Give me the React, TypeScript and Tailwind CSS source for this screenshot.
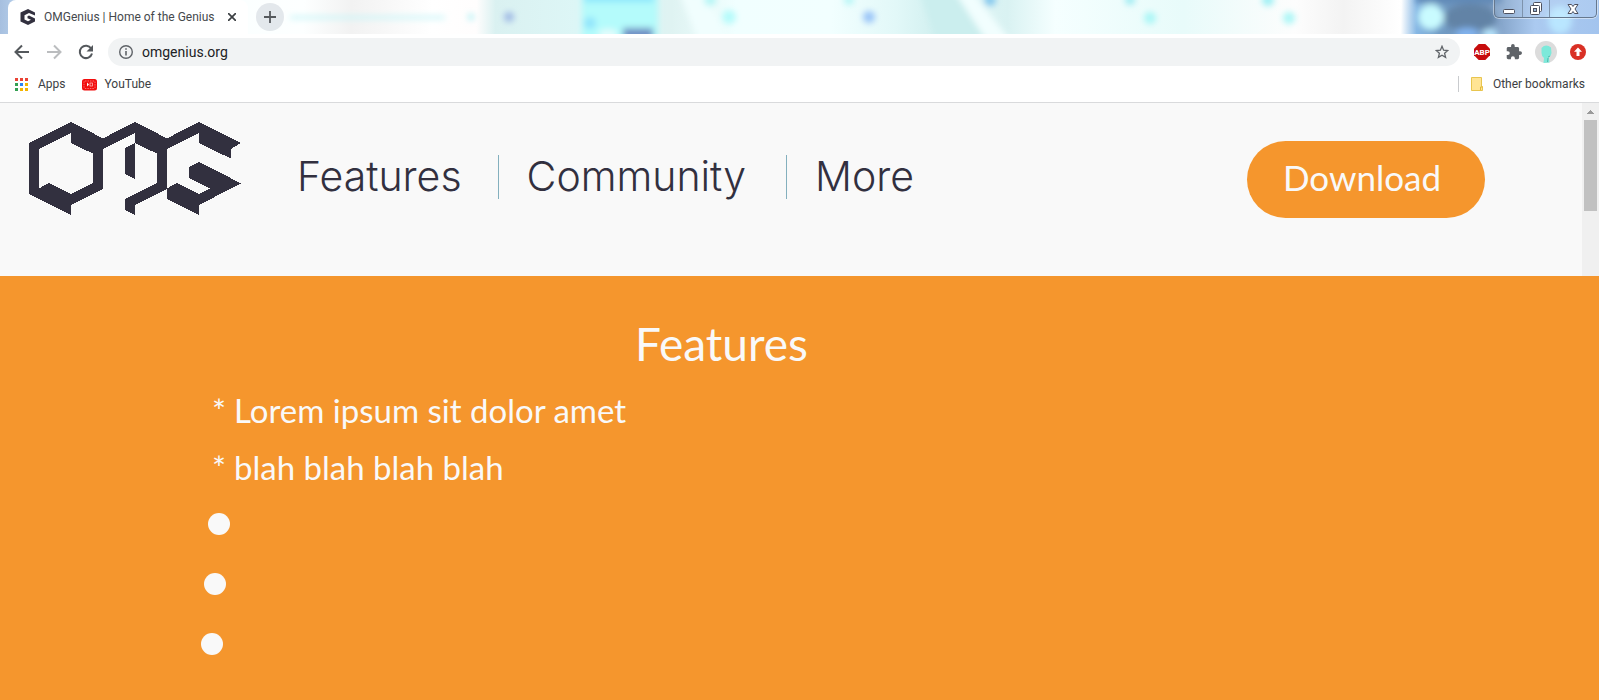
import React from "react";

function Backdrop() {
  return (
    <svg className="absolute inset-0 h-full w-full" viewBox="0 0 1599 34" preserveAspectRatio="none" aria-hidden="true">
      <defs>
        <linearGradient id="sky" x1="0" y1="0" x2="1599" y2="30" gradientUnits="userSpaceOnUse">
          <stop offset="0" stopColor="#a6bfdf" />
          <stop offset="0.02" stopColor="#c3dcf4" />
          <stop offset="0.15" stopColor="#fbffff" />
          <stop offset="0.19" stopColor="#fdffff" />
          <stop offset="0.22" stopColor="#f2f2f2" />
          <stop offset="0.27" stopColor="#ffffff" />
          <stop offset="0.298" stopColor="#fffdfd" />
          <stop offset="0.31" stopColor="#daf1f1" />
          <stop offset="0.36" stopColor="#ddf6f6" />
          <stop offset="0.42" stopColor="#dff3f2" />
          <stop offset="0.46" stopColor="#f1ffff" />
          <stop offset="0.52" stopColor="#f2ffff" />
          <stop offset="0.56" stopColor="#e2f8f8" />
          <stop offset="0.585" stopColor="#d2f0f0" />
          <stop offset="0.6" stopColor="#e0f6f6" />
          <stop offset="0.63" stopColor="#d9f2f2" />
          <stop offset="0.66" stopColor="#f5ffff" />
          <stop offset="0.74" stopColor="#e8fbfa" />
          <stop offset="0.81" stopColor="#fdfdfd" />
          <stop offset="0.84" stopColor="#f3f3f3" />
          <stop offset="0.876" stopColor="#ffffff" />
          <stop offset="0.886" stopColor="#86b7e4" />
          <stop offset="0.9" stopColor="#6f9ac4" />
          <stop offset="0.93" stopColor="#7797bc" />
          <stop offset="0.96" stopColor="#abcaf0" />
          <stop offset="1" stopColor="#a3c4ee" />
        </linearGradient>
        <filter id="soft" x="-50%" y="-50%" width="200%" height="200%">
          <feGaussianBlur stdDeviation="3" />
        </filter>
      </defs>
      <rect width="1599" height="34" fill="url(#sky)" />
      <g filter="url(#soft)">
        <path d="M950 -6h24l36 46h-30Z" fill="#f2fefe" />
        <path d="M920 -6h36l30 46h-50Z" fill="#cbeeee" />
        <path d="M680 -6h26l22 46h-30Z" fill="#f1fefe" />
        <rect x="582" y="-6" width="76" height="50" fill="#b4fbfb" />
        <rect x="584" y="-6" width="70" height="8" fill="#8be6fb" />
        <rect x="623" y="28" width="30" height="12" fill="#6f8ec4" />
        <ellipse cx="590" cy="23" rx="6" ry="6" fill="#90e4fb" />
        <ellipse cx="608" cy="34" rx="10" ry="5" fill="#e4fcfc" />
        <circle cx="509" cy="17" r="5" fill="#9db8e4" />
        <circle cx="471" cy="17" r="3" fill="#a8f0f4" />
        <rect x="290" y="16" width="155" height="3" fill="#c4f5f8" />
        <circle cx="729" cy="17" r="7" fill="#b5fbfb" />
        <circle cx="869" cy="17" r="6" fill="#97c3f8" />
        <circle cx="710" cy="0" r="6" fill="#b5f6f6" />
        <circle cx="849" cy="0" r="5" fill="#b5f6f6" />
        <circle cx="990" cy="0" r="6" fill="#84c8ee" />
        <circle cx="1130" cy="0" r="5" fill="#9cebf2" />
        <circle cx="1150" cy="18" r="6" fill="#a8f6f6" />
        <circle cx="1268" cy="0" r="6" fill="#9cf0f4" />
        <circle cx="1289" cy="18" r="6" fill="#a8f6f6" />
        <ellipse cx="1470" cy="18" rx="26" ry="14" fill="#6283a6" />
        <rect x="1416" y="-6" width="86" height="9" fill="#5f88b6" />
        <ellipse cx="1467" cy="33" rx="12" ry="5" fill="#83b5f2" />
        <ellipse cx="1490" cy="34" rx="8" ry="5" fill="#b9e8ff" />
        <ellipse cx="1560" cy="20" rx="12" ry="14" fill="#b9e6ff" />
        <circle cx="1431" cy="17" r="13" fill="#c9fbff" />
      </g>
    </svg>
  );
}

function Favicon() {
  return (
    <svg className="size-4 shrink-0" viewBox="0 0 16 16" aria-hidden="true">
      <path d="M8 0 15 3.500V6.500L9 4 4.500 6.300v4.200L8 12.200l3-1.500L7.500 9.200V7.300L9 6.500l6 3v3L8 16 .5 12.500v-9Z" fill="#32303f" />
    </svg>
  );
}

function TabStrip() {
  return (
    <div className="relative flex h-[34px] items-stretch overflow-hidden">
      <Backdrop />
      <div className="relative ml-2 flex w-60 items-center rounded-t-lg bg-white pl-3 pr-2">
        <Favicon />
        <span className="ml-2 flex-1 whitespace-nowrap text-xs text-[#45494d]">OMGenius | Home of the Genius</span>
        <button type="button" aria-label="Close tab" className="flex size-4 items-center justify-center">
          <svg className="size-2" viewBox="0 0 8 8" stroke="#3c4043" strokeWidth="1.700" aria-hidden="true"><path d="M0 0 8 8M8 0 0 8" /></svg>
        </button>
      </div>
      <button type="button" aria-label="New tab" className="relative ml-2 mt-[3px] flex size-7 items-center justify-center rounded-full bg-[#e3e8ec]">
        <svg className="size-3" viewBox="0 0 12 12" stroke="#55595d" strokeWidth="1.800" aria-hidden="true"><path d="M6 0v12M0 6h12" /></svg>
      </button>
      <div className="relative ml-auto mr-0.5 flex h-[18px] rounded-b-[5px] border border-t-0 border-[#66788e] bg-white/10 shadow-[0_0_0_1px_#ffffff70]">
        <button type="button" aria-label="Minimize" className="flex w-7 items-center justify-center border-r border-[#7e93ac]">
          <svg className="size-4" viewBox="0 0 16 16" aria-hidden="true"><rect x="2.500" y="8.500" width="11" height="4" rx="1" fill="#fff" stroke="#4d505e" /></svg>
        </button>
        <button type="button" aria-label="Restore" className="flex w-[27px] items-center justify-center border-r border-[#7e93ac]">
          <svg className="size-4" viewBox="0 0 16 16" fill="#fff" stroke="#4d505e" aria-hidden="true"><rect x="5.500" y="1.500" width="8" height="9" rx="1" /><rect x="2.500" y="4.500" width="9" height="9" rx="1" /><rect x="5.500" y="7.500" width="3" height="3" fill="#9db8d8" /></svg>
        </button>
        <button type="button" aria-label="Close" className="flex w-[46px] items-center justify-center">
          <svg className="size-4" viewBox="0 0 16 16" aria-hidden="true"><path d="M3 3.500h3.500L8 5.500l1.500-2H13L10 8l3 4.500H9.500L8 10.500l-1.500 2H3L6 8Z" fill="#fff" stroke="#4d505e" /></svg>
        </button>
      </div>
    </div>
  );
}

function Toolbar() {
  return (
    <div className="flex h-9 items-center bg-white pl-3.5 pr-[13px]">
      <button type="button" aria-label="Back" className="mr-4"><svg className="size-4" viewBox="0 0 16 16" fill="none" stroke="#54585c" strokeWidth="2" aria-hidden="true"><path d="M15 8H2M8 1.500 1.500 8 8 14.500" /></svg></button>
      <button type="button" aria-label="Forward" className="mr-4"><svg className="size-4" viewBox="0 0 16 16" fill="none" stroke="#bbbdbf" strokeWidth="2" aria-hidden="true"><path d="M1 8h13M8 1.500 14.500 8 8 14.500" /></svg></button>
      <button type="button" aria-label="Reload" className="mr-3.5"><svg className="size-4" viewBox="0 0 16 16" aria-hidden="true"><path d="M13.200 4.500A6.200 6.200 0 1 0 14 9.500" fill="none" stroke="#54585c" strokeWidth="2" /><path d="M15 1v6.500H8.500Z" fill="#54585c" /></svg></button>
      <div className="flex h-7 flex-1 items-center rounded-full bg-[#f1f3f4] px-[11px]">
        <svg className="size-3.5" viewBox="0 0 14 14" fill="none" stroke="#5f6368" strokeWidth="1.400" aria-hidden="true"><circle cx="7" cy="7" r="6.300" /><path d="M7 6v4.500M7 3.200v1.600" strokeWidth="1.600" /></svg>
        <input aria-label="Address" defaultValue="omgenius.org" className="ml-[9px] min-w-0 flex-1 bg-transparent text-sm text-[#202124] outline-none" />
        <button type="button" aria-label="Bookmark this page"><svg className="size-3.5" viewBox="0 0 14 14" fill="none" stroke="#5f6368" strokeWidth="1.300" aria-hidden="true"><path d="m7 1.300 1.600 3.900 4.200.3-3.200 2.800 1 4.100L7 10.200l-3.600 2.200 1-4.100L1.200 5.500l4.200-.3Z" /></svg></button>
      </div>
      <button type="button" aria-label="Adblock Plus" className="ml-3.5"><svg className="size-4" viewBox="0 0 16 16" aria-hidden="true"><path d="M4.700 0h6.600L16 4.700v6.600L11.300 16H4.700L0 11.300V4.700Z" fill="#c70d0d" /><text x="8" y="11" textAnchor="middle" fontFamily="Roboto" fontWeight="700" fontSize="8" fill="#fff">ABP</text></svg></button>
      <button type="button" aria-label="Extensions" className="ml-4"><svg className="size-4" viewBox="1 1 22 22" fill="#5f6368" aria-hidden="true"><path d="M20.500 11H19V7c0-1.100-.9-2-2-2h-4V3.500a2.500 2.500 0 0 0-5 0V5H4c-1.100 0-2 .9-2 2v3.800h1.500a2.700 2.700 0 0 1 0 5.400H2V20c0 1.100.9 2 2 2h3.800v-1.500a2.700 2.700 0 0 1 5.400 0V22H17c1.100 0 2-.9 2-2v-4h1.500a2.500 2.500 0 0 0 0-5Z" /></svg></button>
      <button type="button" aria-label="Profile" className="ml-[13px]"><svg className="size-[22px]" viewBox="0 0 22 22" aria-hidden="true"><circle cx="11" cy="11" r="11" fill="#dcdcdc" /><path d="M6.500 7Q11 2.500 16 6.500L16.500 12Q16 15 14 16.500l.5 5-6 .5.500-5Q6.500 15 6.500 12Z" fill="#7de9da" /><path d="M12.500 21l.5-4M13 16l2-1" stroke="#54b9ae" fill="none" /></svg></button>
      <button type="button" aria-label="Update" className="ml-[13px]"><svg className="size-4" viewBox="0 0 16 16" aria-hidden="true"><circle cx="8" cy="8" r="8" fill="#d93025" /><path d="m8 3.500 4 4.300H9.500V12h-3V7.800H4Z" fill="#fff" /></svg></button>
    </div>
  );
}

function Bookmarks() {
  const colors = ["#ea4335", "#ea4335", "#ea4335", "#34a053", "#2b83f6", "#f4b400", "#34a053", "#f4b400", "#f4b400"];
  return (
    <nav aria-label="Bookmarks" className="flex h-[33px] items-center border-b border-[#d9dadc] bg-white pb-1 pl-[15px] pr-3.5 text-xs text-[#3c4043]">
      <a href="#apps" className="flex items-center">
        <svg className="mr-2.5 size-[13px]" viewBox="0 0 13 13" shapeRendering="crispEdges" aria-hidden="true">
          {colors.map((c, i) => (<rect key={i} x={(i % 3) * 5} y={Math.floor(i / 3) * 5} width="3" height="3" fill={c} />))}
        </svg>
        Apps
      </a>
      <a href="#youtube" className="ml-4 flex items-center">
        <svg className="mr-2 size-[15px]" viewBox="0 0 15 15" aria-hidden="true"><rect y="2" width="15" height="11.500" rx="2.500" fill="#f20d0d" /><rect x="2" y="4" width="11" height="7.500" rx="1" fill="none" stroke="#ffb0b0" strokeWidth=".6" strokeDasharray="1.500 1" /><path d="M5 5.500v4l2-2Z" fill="#fff" /><rect x="8" y="6" width="2.500" height="3" fill="none" stroke="#ffd0d0" strokeWidth=".7" /></svg>
        YouTube
      </a>
      <a href="#other" className="ml-auto flex h-4 items-center border-l border-[#c9cbce] pl-3">
        <svg className="mr-2.5 h-3.5 w-3" viewBox="0 0 12 14" aria-hidden="true"><path d="M.5.5h10v9h1v4H.5Z" fill="#ffe494" stroke="#e8c54f" /><path d="M9.500 13v-3h2" fill="none" stroke="#e3b93a" /></svg>
        Other bookmarks
      </a>
    </nav>
  );
}

function Logo() {
  return (
    <svg className="h-[93px] w-[212px] shrink-0" viewBox="87 66 636 279" role="img" aria-label="OMG" shapeRendering="crispEdges">
      <path fill="#32303f" fillRule="evenodd" d="M87 129 213 66l96 49 96-49 96 49 96-49 126 63-30 18v29l-96-47V99l-96 48v120l-96 48v30l-30-15v-33l96-48v-88l-66-32V99l-96 48v120l-96 48v30L87 282ZM117 147v118l30-16 66 33 66-33v-88l-66-32V99ZM375 144l30-15v108l-30-15ZM501 265l30-16 66 33 33-17-63-31v-33l30-15 126 64-126 65v30l-96-48Z" />
    </svg>
  );
}

function SiteHeader() {
  return (
    <header className="flex h-[173px] bg-[#f9f9f9]">
      <div className="flex flex-1 items-start pl-[29px]">
        <a href="#home" className="mt-[19px]"><Logo /></a>
        <nav aria-label="Main" className="ml-14 mt-[52px] flex h-11 items-stretch font-['Inter'] text-[41px] font-light leading-[42px] text-[#32303f]">
          <a href="#features">Features</a>
          <a href="#community" className="ml-9 border-l border-[#84b0be] pl-7">Community</a>
          <a href="#more" className="ml-10 border-l border-[#84b0be] pl-7">More</a>
        </nav>
        <button type="button" className="ml-auto mr-[97px] mt-[38px] flex h-[77px] w-[238px] items-center justify-center rounded-[40px] bg-[#f5962d] pb-1 pr-2 font-['Lato'] text-[35px] font-normal text-[#f9f9f9]">Download</button>
      </div>
      <div className="w-[17px] bg-[#f0f0f0] px-0.5 pt-[7px]" aria-hidden="true">
        <svg className="mx-auto h-1 w-[7px]" viewBox="0 0 7 4" shapeRendering="crispEdges"><path d="M0 4h7L3.500 0Z" fill="#9a9a9a" /></svg>
        <div className="mt-1.5 h-[91px] bg-[#c1c1c1]" />
      </div>
    </header>
  );
}

function Features() {
  return (
    <section className="flex-1 bg-[#f5962d] px-[200px] pt-[38px] font-['Lato'] font-normal text-[#f9f9f9]">
      <h1 className="pl-[435px] text-[46px] leading-[60px]">Features</h1>
      <ul className="mt-2 text-[33px]">
        <li className="flex h-[57px] items-center pl-3"><span className="w-[22px]">*</span>Lorem ipsum sit dolor amet</li>
        <li className="flex h-[57px] items-center pl-3"><span className="w-[22px]">*</span>blah blah blah blah</li>
      </ul>
      <div className="mt-[17px] flex flex-col gap-[38px]" aria-hidden="true">
        <span className="ml-2 size-[22px] rounded-full bg-[#f9f9f9]" />
        <span className="ml-1 size-[22px] rounded-full bg-[#f9f9f9]" />
        <span className="ml-px size-[22px] rounded-full bg-[#f9f9f9]" />
      </div>
    </section>
  );
}

export default function App() {
  return (
    <div className="flex min-h-screen flex-col bg-[#f5962d] font-['Roboto',sans-serif]">
      <TabStrip />
      <Toolbar />
      <Bookmarks />
      <SiteHeader />
      <Features />
    </div>
  );
}
